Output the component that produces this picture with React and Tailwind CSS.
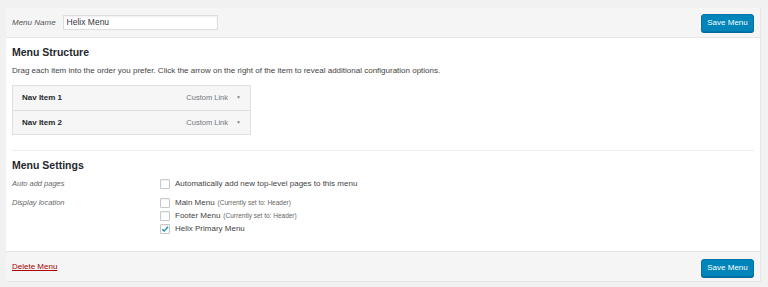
import React from "react";

function SaveButton() {
  return (
    <button className="h-[18px] w-[53px] rounded-[3px] border border-[#0073aa] bg-[#0085ba] text-[8px] leading-[16px] text-white shadow-[0_1px_0_#006799]">
      Save Menu
    </button>
  );
}

function Checkbox({ checked }) {
  return (
    <span className="relative flex h-[10px] w-[10px] shrink-0 items-center justify-center rounded-[1px] border border-[#c6c9cc] bg-white shadow-[inset_0_1px_1px_rgba(0,0,0,0.06)]">
      {checked && (
        <svg viewBox="0 0 10 10" className="absolute h-[10px] w-[10px]">
          <path d="M2.2 5.2 L4.2 7.1 L8 2.8" fill="none" stroke="#1e8cbe" strokeWidth="1.4" />
        </svg>
      )}
    </span>
  );
}

function NavItem({ label, border }) {
  return (
    <div className={`flex h-[24px] items-center bg-[#f6f6f6] pl-[9px] pr-[9px] ${border ? "border-t border-[#dfdfdf]" : ""}`}>
      <span className="text-[8px] font-bold text-[#23282d]">{label}</span>
      <span className="ml-auto text-[7.5px] text-[#72777c]">Custom Link</span>
      <span className="ml-[8px] text-[5px] text-[#888]">▼</span>
    </div>
  );
}

export default function App() {
  return (
    <div className="min-h-[287px] bg-[#f1f1f1] pl-[6px] pr-[7px] pt-[8px] pb-[7px] font-['Liberation_Sans',Arial,sans-serif] text-[#444]">
      <div className="border border-[#e5e5e5] border-t-0 border-l-0 bg-white">
        <div className="flex h-[30px] items-center border-b border-[#e5e5e5] bg-[#f5f5f5] pl-[6px] pr-[6px]">
          <span className="text-[8px] italic text-[#555]">Menu Name</span>
          <div className="ml-[7px] flex h-[15px] w-[155px] items-center border border-[#ddd] bg-white pl-[3px] text-[8.5px] text-[#32373c] shadow-[inset_0_1px_2px_rgba(0,0,0,0.07)]">
            Helix Menu
          </div>
          <div className="ml-auto flex">
            <SaveButton />
          </div>
        </div>

        <div className="px-[6px] pt-[6px] pb-[16px]">
          <h3 className="text-[10.5px] font-semibold leading-[16px] text-[#23282d]">Menu Structure</h3>
          <p className="mt-[4px] text-[8px] leading-[14px] text-[#444]">
            Drag each item into the order you prefer. Click the arrow on the right of the item to reveal additional configuration options.
          </p>
          <div className="mt-[7px] w-[239px] border border-[#dfdfdf]">
            <NavItem label="Nav Item 1" />
            <NavItem label="Nav Item 2" border />
          </div>
          <div className="mt-[15px] border-t border-[#eee]" />
          <h3 className="mt-[6px] text-[10.5px] font-semibold leading-[16px] text-[#23282d]">Menu Settings</h3>
          <div className="mt-[4px] flex h-[14px] items-center">
            <span className="w-[148px] text-[7.5px] italic text-[#666]">Auto add pages</span>
            <Checkbox />
            <span className="ml-[5px] text-[8px] text-[#444]">Automatically add new top-level pages to this menu</span>
          </div>
          <div className="mt-[5px] flex">
            <span className="w-[148px] pt-[1px] text-[7.5px] leading-[12px] italic text-[#666]">Display location</span>
            <div className="flex flex-col">
              <div className="flex h-[13px] items-center">
                <Checkbox />
                <span className="ml-[5px] text-[8px] text-[#444]">Main Menu</span>
                <span className="ml-[3px] text-[6.5px] text-[#666]">(Currently set to: Header)</span>
              </div>
              <div className="flex h-[13px] items-center">
                <Checkbox />
                <span className="ml-[5px] text-[8px] text-[#444]">Footer Menu</span>
                <span className="ml-[3px] text-[6.5px] text-[#666]">(Currently set to: Header)</span>
              </div>
              <div className="flex h-[13px] items-center">
                <Checkbox checked />
                <span className="ml-[5px] text-[8px] text-[#444]">Helix Primary Menu</span>
              </div>
            </div>
          </div>
        </div>

        <div className="flex h-[30px] items-center border-t border-[#e5e5e5] bg-[#f5f5f5] px-[6px]">
          <a className="text-[8px] text-[#a00] underline">Delete Menu</a>
          <div className="ml-auto flex pt-[2px]">
            <SaveButton />
          </div>
        </div>
      </div>
    </div>
  );
}
